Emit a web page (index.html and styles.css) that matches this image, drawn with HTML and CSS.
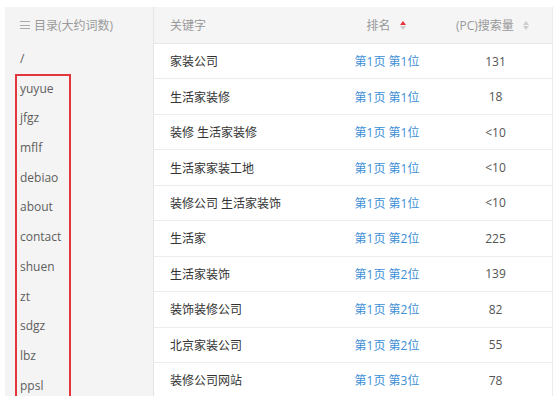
FILE: index.html
```html
<!DOCTYPE html>
<html>
<head>
<meta charset="utf-8">
<link rel="stylesheet" href="styles.css">
</head>
<body>
<div class="page">
  <aside class="side">
    <div class="side-head"><span class="menu-ico"><i></i><i></i><i></i></span>目录(大约词数)</div>
    <div class="side-item root">/</div>
    <div class="boxed">
      <div class="side-item">yuyue</div>
      <div class="side-item">jfgz</div>
      <div class="side-item">mflf</div>
      <div class="side-item">debiao</div>
      <div class="side-item">about</div>
      <div class="side-item">contact</div>
      <div class="side-item">shuen</div>
      <div class="side-item">zt</div>
      <div class="side-item">sdgz</div>
      <div class="side-item">lbz</div>
      <div class="side-item">ppsl</div>
    </div>
  </aside>
  <main class="table">
    <div class="row head">
      <div class="c kw">关键字</div>
      <div class="c rk">排名 <span class="sort active"><b class="up"></b><b class="down"></b></span></div>
      <div class="c vol">(PC)搜索量 <span class="sort"><b class="up"></b><b class="down"></b></span></div>
    </div>
    <div class="row"><div class="c kw">家装公司</div><div class="c rk link">第1页 第1位</div><div class="c vol">131</div></div>
    <div class="row"><div class="c kw">生活家装修</div><div class="c rk link">第1页 第1位</div><div class="c vol">18</div></div>
    <div class="row"><div class="c kw">装修 生活家装修</div><div class="c rk link">第1页 第1位</div><div class="c vol">&lt;10</div></div>
    <div class="row"><div class="c kw">生活家家装工地</div><div class="c rk link">第1页 第1位</div><div class="c vol">&lt;10</div></div>
    <div class="row"><div class="c kw">装修公司 生活家装饰</div><div class="c rk link">第1页 第1位</div><div class="c vol">&lt;10</div></div>
    <div class="row"><div class="c kw">生活家</div><div class="c rk link">第1页 第2位</div><div class="c vol">225</div></div>
    <div class="row"><div class="c kw">生活家装饰</div><div class="c rk link">第1页 第2位</div><div class="c vol">139</div></div>
    <div class="row"><div class="c kw">装饰装修公司</div><div class="c rk link">第1页 第2位</div><div class="c vol">82</div></div>
    <div class="row"><div class="c kw">北京家装公司</div><div class="c rk link">第1页 第2位</div><div class="c vol">55</div></div>
    <div class="row"><div class="c kw">装修公司网站</div><div class="c rk link">第1页 第3位</div><div class="c vol">78</div></div>
  </main>
</div>
</body>
</html>
```
FILE: styles.css
```css
* { box-sizing: border-box; }
html, body { margin: 0; background: #fff; }
body {
  font-family: "Open Sans", "Noto Sans CJK SC", sans-serif;
  font-size: 12px;
  color: #333;
  overflow: hidden;
  height: 396px;
}
.page {
  display: flex;
  padding: 7px 0 0 5px;
  height: 396px;
}
.side {
  width: 149px;
  flex: none;
  background: #f4f4f4;
  border-right: 1px solid #e4e4e4;
}
.side-head {
  height: 36px;
  display: flex;
  align-items: center;
  padding-left: 15px;
  color: #9a9a9a;
  font-size: 12px;
}
.menu-ico {
  display: inline-flex;
  flex-direction: column;
  justify-content: space-between;
  width: 10px;
  height: 8px;
  margin-right: 4px;
}
.menu-ico i {
  display: block;
  height: 1px;
  background: #aaa;
}
.side-item {
  height: 29.7px;
  line-height: 29.7px;
  color: #5e5e5e;
  font-size: 12px;
}
.root { padding-left: 15px; margin-top: 1px; }
.boxed {
  margin-left: 10px;
  width: 56px;
  border: 2px solid #e2363c;
  border-bottom: none;
}
.boxed .side-item { padding-left: 3px; }
.boxed .side-item:first-child { margin-top: -2px; }

.table {
  width: 399px;
  flex: none;
  border-right: 1px solid #ececec;
}
.row {
  display: flex;
  align-items: center;
  height: 35.45px;
  border-bottom: 1px solid #ececec;
  background: #fff;
}
.row.head {
  height: 37px;
  background: #f5f5f5;
  color: #999;
  border-bottom: 1px solid #e8e8e8;
}
.c { white-space: nowrap; }
.kw { width: 185px; padding-left: 16px; }
.rk { width: 100px; text-align: center; }
.vol { width: 113px; text-align: center; color: #555; }
.head .vol { color: #999; padding-right: 6px; }
.head .rk { padding-right: 6px; }
.link { color: #3d8fd6; padding-right: 4px; }
.sort {
  display: inline-flex;
  flex-direction: column;
  vertical-align: middle;
  margin-left: 6px;
  gap: 1px;
  position: relative;
  top: -1px;
}
.sort b {
  display: block;
  width: 0;
  height: 0;
  border-left: 3.5px solid transparent;
  border-right: 3.5px solid transparent;
}
.sort .up { border-bottom: 4px solid #ccc; }
.sort .down { border-top: 4px solid #ccc; }
.sort.active .up { border-bottom-color: #e8303a; }
```
